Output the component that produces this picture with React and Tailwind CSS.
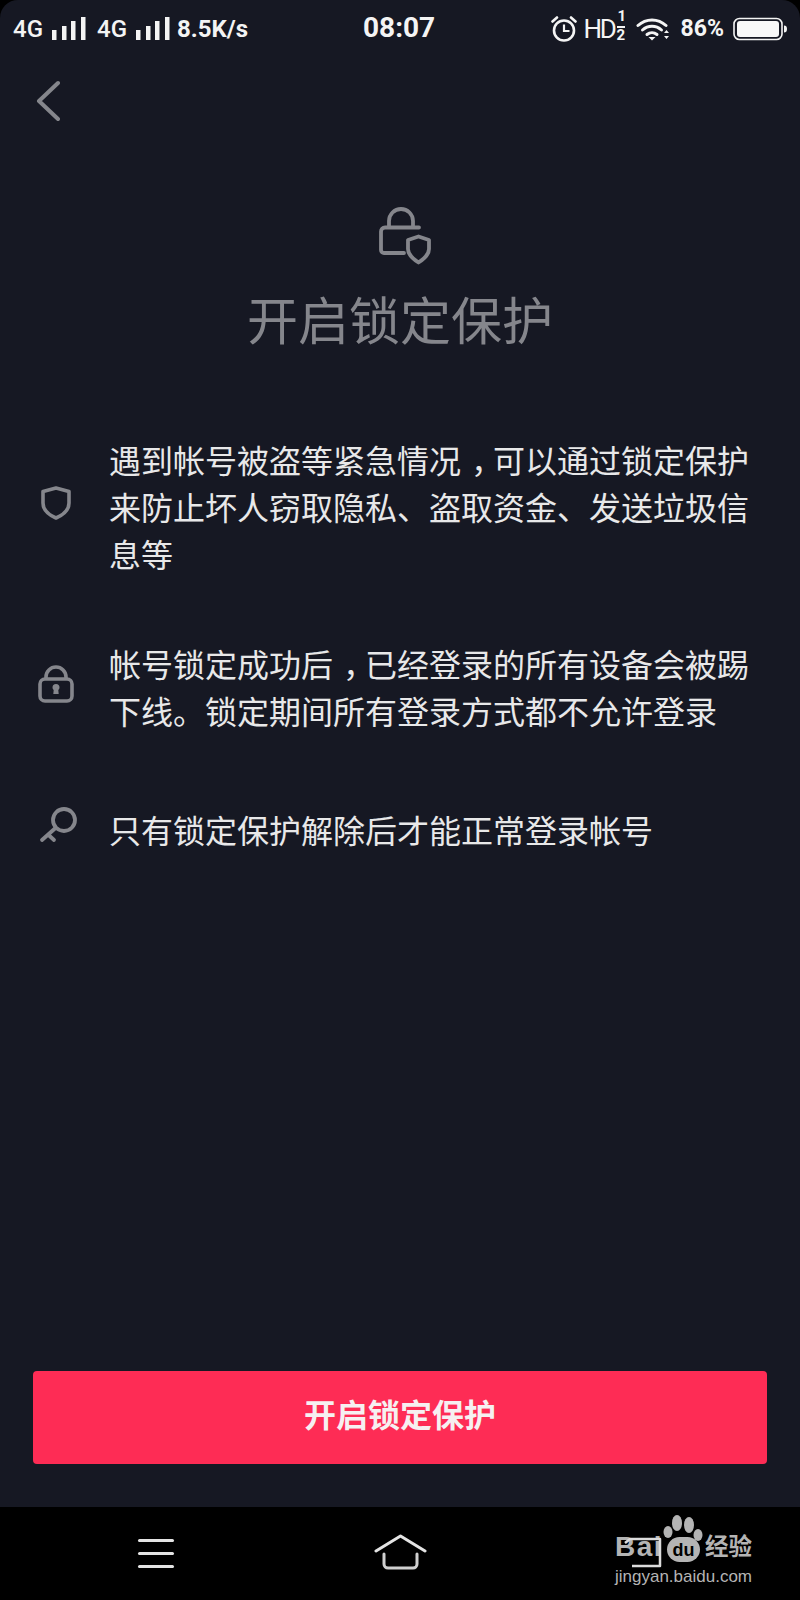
import React from 'react';

const cjk = { fontFamily: '"Noto Sans CJK SC", "Noto Sans", sans-serif' };

function Signal() {
    return (
        <svg width="34" height="24" viewBox="0 0 34 24" className="block">
            <rect x="0" y="13" width="4.500" height="10" fill="#f4f4f4" />
            <rect x="10" y="9" width="4.500" height="14" fill="#f4f4f4" />
            <rect x="19" y="4" width="4.500" height="19" fill="#f4f4f4" />
            <rect x="29" y="0" width="4.500" height="23" fill="#f4f4f4" />
        </svg>
    );
}

function StatusBar() {
    return (
        <div className="relative flex h-[56px] shrink-0 items-center justify-between pl-[13px] pr-[12px] pt-[1px] text-[#f4f4f4]" style={{ fontFamily: 'Roboto, sans-serif' }}>
            <div className="flex items-center">
                <span className="w-[32px] text-[24px] font-medium leading-none">4G</span>
                <span className="ml-[7px]"><Signal /></span>
                <span className="ml-[11px] w-[32px] text-[24px] font-medium leading-none">4G</span>
                <span className="ml-[7px]"><Signal /></span>
                <span className="ml-[7px] text-[24px] font-bold leading-none">8.5K/s</span>
            </div>
            <div className="absolute left-[363px] top-[12px] text-[28px] font-bold leading-[32px]">08:07</div>
            <div className="flex items-center">
                <svg width="26" height="28" viewBox="0 0 26 28" fill="none" stroke="#f4f4f4" strokeWidth="2.600">
                    <circle cx="13" cy="15.500" r="10" />
                    <path d="M13 9.500v6.500h5.500" strokeWidth="2.200" />
                    <path d="M1.500 6.500 6 2.500M24.500 6.500 20 2.500" strokeLinecap="round" />
                </svg>
                <span className="relative ml-[7px] w-[44px] text-[26px] leading-none tracking-[-2.500px]">
                    HD
                    <span className="absolute left-[34px] top-[-7px] text-[15px] font-bold leading-none tracking-normal">1</span>
                    <span className="absolute left-[33px] top-[10px] border-t-2 border-[#f4f4f4] text-[15px] font-bold leading-none tracking-normal">2</span>
                </span>
                <svg width="34" height="24" viewBox="0 0 34 24" fill="none" stroke="#f4f4f4" strokeWidth="3" strokeLinecap="round" className="ml-[8px]">
                    <path d="M2 8.500C10 1 22 1 30 8.500" />
                    <path d="M6.500 13C12 8 20 8 25.500 13" />
                    <path d="M11 17.500c3-2.500 7-2.500 10 0" />
                    <path d="M12.500 20 16 23.500l3.500-3.500z" fill="#f4f4f4" stroke="none" />
                    <path d="M28 16l2.500-3 2.500 3zM28 19h5l-2.500 3z" fill="#f4f4f4" stroke="none" />
                </svg>
                <span className="ml-[11px] text-[23px] font-bold leading-none">86%</span>
                <svg width="55" height="24" viewBox="0 0 55 24" fill="none" className="ml-[9px]">
                    <rect x="1" y="1.500" width="48" height="21" rx="5.500" stroke="#f4f4f4" strokeWidth="1.600" />
                    <rect x="4" y="4" width="42" height="16" rx="3" fill="#f8f8f8" />
                    <path d="M51 8.500c2 0 3 1 3 3.500s-1 3.500-3 3.500z" fill="#f4f4f4" />
                </svg>
            </div>
        </div>
    );
}

const rows = [
    {
        id: 'shield',
        className: 'mt-0 h-[141px]',
        iconClass: 'pb-[8px]',
        lines: ['遇到帐号被盗等紧急情况，可以通过锁定保护', '来防止坏人窃取隐私、盗取资金、发送垃圾信', '息等'],
        icon: (
            <svg width="30" height="34" viewBox="0 0 30 34" fill="none" stroke="#85868c" strokeWidth="3.600" strokeLinejoin="round">
                <path d="M15 2 28 5.500V17C28 24 22 29 15 32 8 29 2 24 2 17V5.500Z" />
            </svg>
        ),
    },
    {
        id: 'lock',
        className: 'mt-[63px] h-[94px]',
        iconClass: 'pb-[6px]',
        lines: ['帐号锁定成功后，已经登录的所有设备会被踢', '下线。锁定期间所有登录方式都不允许登录'],
        icon: (
            <svg width="36" height="38" viewBox="0 0 36 38" fill="none" stroke="#85868c" strokeWidth="3.600">
                <rect x="2" y="14" width="32" height="22" rx="5" />
                <path d="M8 14v-2a10 10 0 0 1 20 0v2" />
                <path d="M14.500 22.500a3.500 3.500 0 1 1 7 0c0 1.200-.6 2-1.200 2.500l.4 4h-5.400l.4-4c-.6-.5-1.200-1.300-1.200-2.500z" fill="#85868c" stroke="none" />
            </svg>
        ),
    },
    {
        id: 'key',
        className: 'mt-[72px] h-[47px]',
        iconClass: 'pb-[10px]',
        lines: ['只有锁定保护解除后才能正常登录帐号'],
        icon: (
            <svg width="38" height="36" viewBox="0 0 38 36" fill="none" stroke="#85868c" strokeWidth="3.800" strokeLinecap="round" className="ml-[3px]">
                <circle cx="25" cy="13" r="11" />
                <path d="M16.500 21 3 33M9 27.500l6 5.500" />
            </svg>
        ),
    },
];

// the full-width comma sits in the middle of its cell in the screenshot
function Line({ text }) {
    const parts = text.split('，');
    if (parts.length === 1) return <div className="whitespace-nowrap">{text}</div>;
    return (
        <div className="whitespace-nowrap">
            {parts[0]}
            <span className="ml-[10px] tracking-[-10px]">，</span>
            {parts[1]}
        </div>
    );
}

function Row({ row }) {
    return (
        <div className={`flex items-center ${row.className}`}>
            <div className={`mr-[15px] flex w-[76px] shrink-0 justify-center ${row.iconClass}`}>{row.icon}</div>
            <div className="text-[32px] leading-[47px] text-[#e8e8e9]">
                {row.lines.map((line) => (
                    <Line key={line} text={line} />
                ))}
            </div>
        </div>
    );
}

export default function App() {
    return (
        <div className="relative flex h-[1600px] w-[800px] flex-col overflow-hidden bg-black" style={cjk}>
            <div className="flex flex-1 flex-col rounded-t-[18px] bg-[#161823]">
                <StatusBar />

                <div className="h-[66px] shrink-0 pl-[36px] pt-[24px]">
                    <svg width="24" height="42" viewBox="0 0 24 42" fill="none" stroke="#85868c" strokeWidth="4" strokeLinecap="round" strokeLinejoin="round">
                        <path d="M22 3 3 21l19 18" />
                    </svg>
                </div>

                <div className="mt-[85px] flex flex-col items-center">
                    <svg width="52" height="58" viewBox="0 0 52 58" fill="none" stroke="#85868c" strokeWidth="3.800" strokeLinejoin="round" strokeLinecap="round" className="ml-[10px]">
                        <path d="M10 19v-5a12 12 0 0 1 24 0v5" />
                        <path d="M40 20.500H6a4 4 0 0 0-4 4V43a3 3 0 0 0 3 3h20" />
                        <path d="M39.500 29.500l10.500 3.500v9c0 6-5 10-10.500 13.500C34 52 29 48 29 42v-9z" />
                    </svg>
                    <h1 className="mt-[17px] text-[51px] font-normal leading-[72px] text-[#85868c]">开启锁定保护</h1>
                </div>

                <div className="mt-[82px] flex flex-col pl-[18px]">
                    {rows.map((row) => (
                        <Row key={row.id} row={row} />
                    ))}
                </div>

                <div className="flex-1" />

                <div className="px-[33px] pb-[43px]">
                    <button className="block h-[93px] w-full rounded-[4px] bg-[#fe2c55] pb-[10px] text-[32px] font-bold text-[#f6f0f1]">
                        开启锁定保护
                    </button>
                </div>
            </div>

            <div className="relative flex h-[93px] shrink-0 bg-black">
                <div className="absolute left-[138px] top-[32px] flex h-[29px] w-[36px] flex-col justify-between">
                    <div className="h-[3px] rounded-full bg-[#e4e4e4]" />
                    <div className="h-[3px] rounded-full bg-[#e4e4e4]" />
                    <div className="h-[3px] rounded-full bg-[#e4e4e4]" />
                </div>
                <svg width="53" height="37" viewBox="0 0 53 37" fill="none" stroke="#e4e4e4" strokeWidth="3" strokeLinecap="round" strokeLinejoin="round" className="absolute left-[374px] top-[27px]">
                    <path d="M2 17 26.500 2 51 17" />
                    <path d="M10 20v10a4 4 0 0 0 4 4h25a4 4 0 0 0 4-4V20" stroke="#cfcfcf" />
                </svg>

                <div className="absolute left-[600px] top-0 h-[93px] w-[170px] text-[#b4b4b4]">
                    <svg width="46" height="32" viewBox="0 0 46 32" fill="#b4b4b4" className="absolute left-[60px] top-[5px]">
                        <ellipse cx="8" cy="20" rx="4.500" ry="6" />
                        <ellipse cx="17" cy="11" rx="5" ry="8" />
                        <ellipse cx="29" cy="13" rx="5" ry="8" />
                        <ellipse cx="38" cy="23" rx="4.500" ry="6" />
                    </svg>
                    <span className="absolute left-[15px] top-[26px] text-[28px] font-bold leading-none tracking-[1.500px]" style={{ fontFamily: '"Liberation Sans", sans-serif' }}>Bai</span>
                    <span className="absolute left-[67px] top-[30px] flex h-[25px] w-[33px] items-center justify-center rounded-full bg-[#b4b4b4] text-[18px] font-bold leading-none text-black" style={{ fontFamily: '"Liberation Sans", sans-serif' }}>du</span>
                    <span className="absolute left-[105px] top-[27px] text-[23.500px] font-bold leading-none">经验</span>
                    <span className="absolute left-[15px] top-[61px] whitespace-nowrap text-[17px] leading-none" style={{ fontFamily: '"Liberation Sans", sans-serif' }}>jingyan.baidu.com</span>
                    <svg width="44" height="34" viewBox="0 0 44 34" fill="none" stroke="#dcdcdc" strokeWidth="2.500" strokeLinejoin="round" className="absolute left-[22px] top-[30px]">
                        <path d="M3 6 8 2H38V29H10" />
                    </svg>
                </div>
            </div>
        </div>
    );
}
